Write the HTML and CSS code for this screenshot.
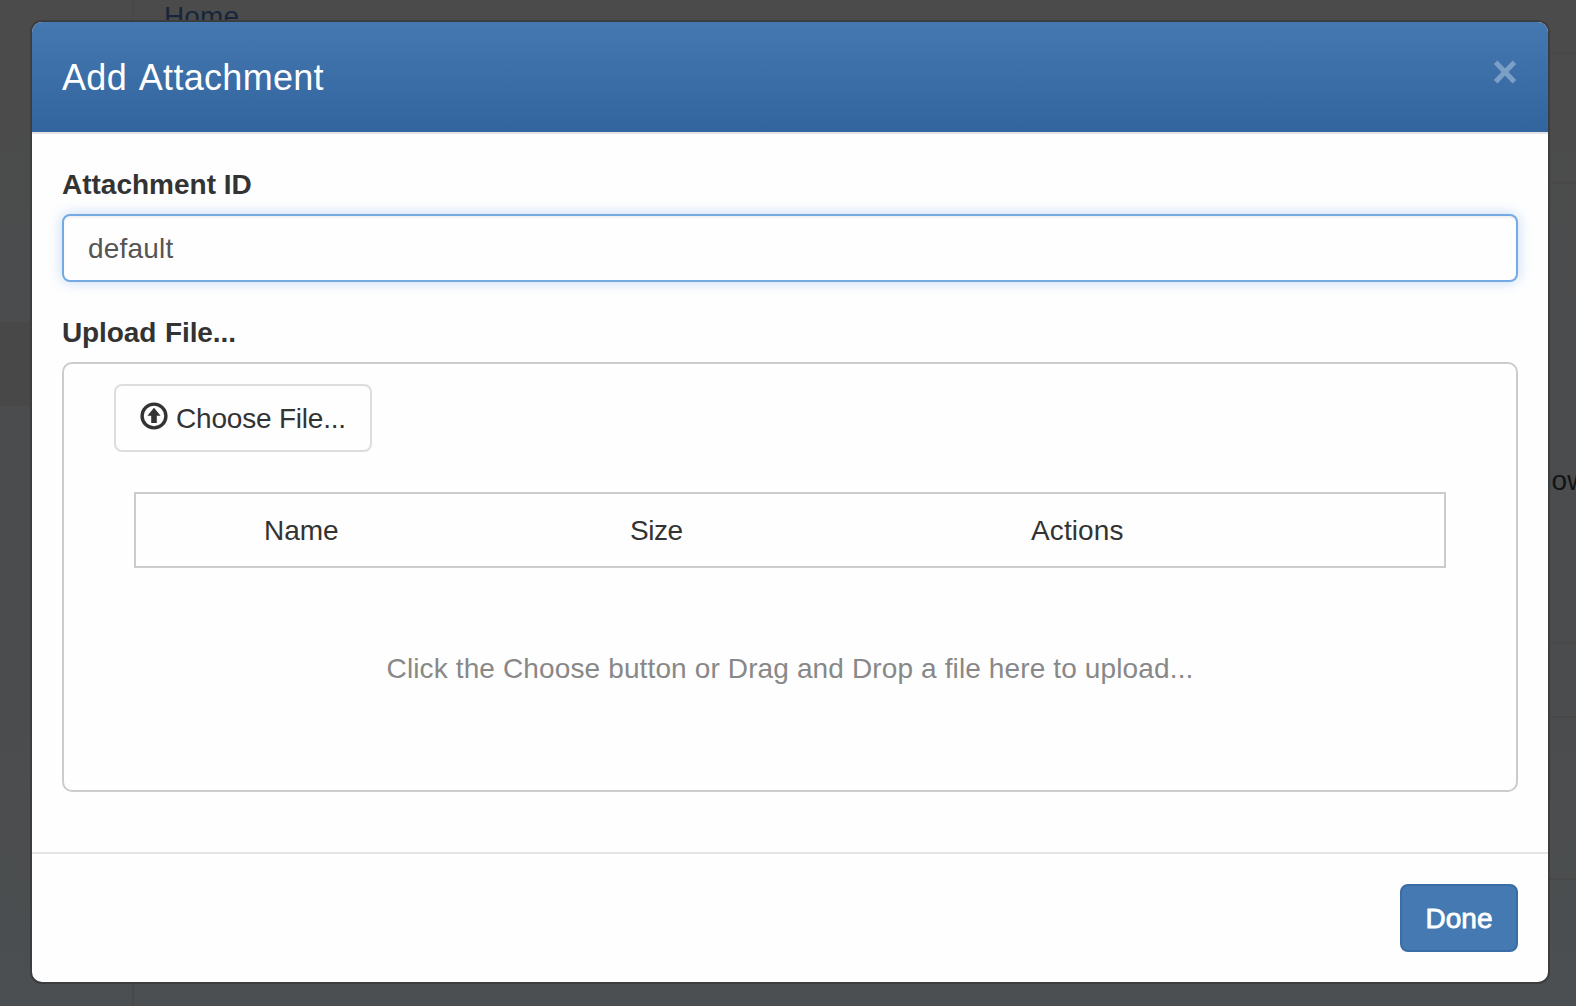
FILE: index.html
```html
<!DOCTYPE html>
<html lang="en">
<head>
<meta charset="utf-8">
<title>Add Attachment</title>
<link rel="stylesheet" href="styles.css">
</head>
<body>
<div class="page">
  <aside class="sidebar"><div class="sidebar-item"></div></aside>
  <main class="main">
    <div class="row row-nav"><span class="home">Home</span></div>
    <div class="row row-title"></div>
    <div class="row row-body"><span class="snippet">now</span></div>
    <div class="row row-small"></div>
    <div class="row row-lower"></div>
    <div class="row-last"></div>
  </main>
</div>
<div class="modal">
  <header class="modal-header">
    <h4 class="modal-title">Add Attachment</h4>
    <svg class="close" viewBox="0 0 24 24" width="24" height="24"><path d="M2.6 2.2L21.4 21.8M21.4 2.2L2.6 21.8"/></svg>
  </header>
  <section class="modal-body">
    <label class="label label-id" for="attachment">Attachment ID</label>
    <input class="input" id="attachment" type="text" value="default">
    <div class="label label-file">Upload File...</div>
    <div class="upload">
      <button class="choose" type="button">
        <svg class="choose-icon" viewBox="0 0 28 28" width="28" height="28"><circle cx="14" cy="14" r="11.9"/><path d="M14 5.8L20.6 13.8H16.8V21H11.2V13.8H7.4Z"/></svg>
        <span class="choose-text">Choose File...</span>
      </button>
      <div class="table-head">
        <span class="col-name">Name</span>
        <span class="col-size">Size</span>
        <span class="col-actions">Actions</span>
      </div>
      <p class="hint">Click the Choose button or Drag and Drop a file here to upload...</p>
    </div>
  </section>
  <footer class="modal-footer"><button class="done" type="button">Done</button></footer>
</div>
</body>
</html>
```
FILE: styles.css
```css
* { box-sizing: border-box; }
body {
  margin: 0;
  height: 1006px;
  overflow: hidden;
  font-family: "Liberation Sans", Arial, sans-serif;
  font-size: 28px;
  line-height: 40px;
  color: #333;
  background: #4b4b4b;
}
.page { display: flex; height: 1006px; background: linear-gradient(#4b4b4b, #4b4c4d 30%, #4b4c4d 70%, #4b4f51); }
.sidebar { flex: none; width: 134px; padding-top: 322px; border-right: 2px solid #474849; }
.sidebar-item { height: 84px; background: #484848; }
.main { flex: 1; min-width: 0; display: flex; flex-direction: column; overflow: hidden; }
.row { flex: none; border-bottom: 2px solid #484848; }
.row-nav { height: 54px; padding-left: 30px; line-height: 34px; color: #17263a; }
.home { letter-spacing: 0.1px; }
.row-title { height: 130px; }
.row-body { height: 460px; padding: 277px 0 0 1402px; color: #131415; white-space: nowrap; }
.row-small { height: 74px; }
.row-lower { height: 162px; }
.row-last { flex: 1; }

.modal {
  position: absolute;
  left: 30px;
  top: 20px;
  width: 1520px;
  height: 964px;
  display: flex;
  flex-direction: column;
  border: 2px solid #3c3d3e;
  border-radius: 12px;
  background: #fefefe;
  overflow: hidden;
}
.modal-header {
  height: 112px;
  display: flex;
  justify-content: space-between;
  padding: 30px 31px 0 30px;
  border-bottom: 2px solid #e5e2e8;
  background: linear-gradient(#4577b0, #32659d) padding-box;
}
.modal-title { margin: 0; padding-top: 1px; font-size: 36px; line-height: 50px; font-weight: 400; letter-spacing: 0.3px; word-spacing: 3.5px; color: #fff; }
.close { margin-top: 8px; fill: none; stroke: #7b9fc6; stroke-width: 5; stroke-linecap: butt; }
.modal-body { height: 718px; padding: 30px; }
.label { display: block; height: 40px; padding-top: 1px; font-weight: 700; }
.label-file { margin-top: 28px; padding-top: 3px; letter-spacing: -0.1px; word-spacing: 1px; }
.input {
  display: block;
  width: 100%;
  height: 68px;
  margin-top: 10px;
  padding: 1px 24px 0;
  border: 2px solid #74aae1;
  border-radius: 8px;
  outline: 0;
  font: inherit;
  letter-spacing: 0.2px;
  color: #555;
  background: #fefefe;
  box-shadow: inset 0 2px 2px rgba(0,0,0,.05), 0 0 14px rgba(102,160,233,.4);
}
.upload { height: 430px; margin-top: 12px; padding: 20px 50px; border: 2px solid #ccc; border-radius: 10px; }
.choose {
  display: flex;
  align-items: center;
  width: 258px;
  height: 68px;
  padding: 0 24px;
  border: 2px solid #ddd;
  border-radius: 8px;
  font: inherit;
  color: #333;
  background: #fefefe;
}
.choose-icon { flex: none; margin-top: -4px; fill: #333; }
.choose-icon circle { fill: none; stroke: #333; stroke-width: 3.4; }
.choose-text { margin-left: 8px; padding-top: 2px; letter-spacing: -0.2px; white-space: nowrap; }
.table-head { display: grid; grid-template-columns: 366px 400px 1fr; height: 76px; margin: 40px 20px 0; padding: 17px 0 0 128px; border: 2px solid #ccc; }
.col-size { letter-spacing: -0.5px; }
.col-actions { padding-left: 1px; letter-spacing: 0.1px; }
.hint { margin: 81px 0 0; text-align: center; letter-spacing: 0.13px; color: #888; }
.modal-footer { flex: 1; display: flex; justify-content: flex-end; padding: 30px; border-top: 2px solid #e5e5e5; }
.done {
  width: 118px;
  height: 68px;
  padding: 2px 0 0;
  border: 2px solid #3b6da5;
  border-radius: 8px;
  font: inherit;
  color: #fff;
  background: #4479b2;
  -webkit-text-stroke: 0.8px #fff;
}
```
